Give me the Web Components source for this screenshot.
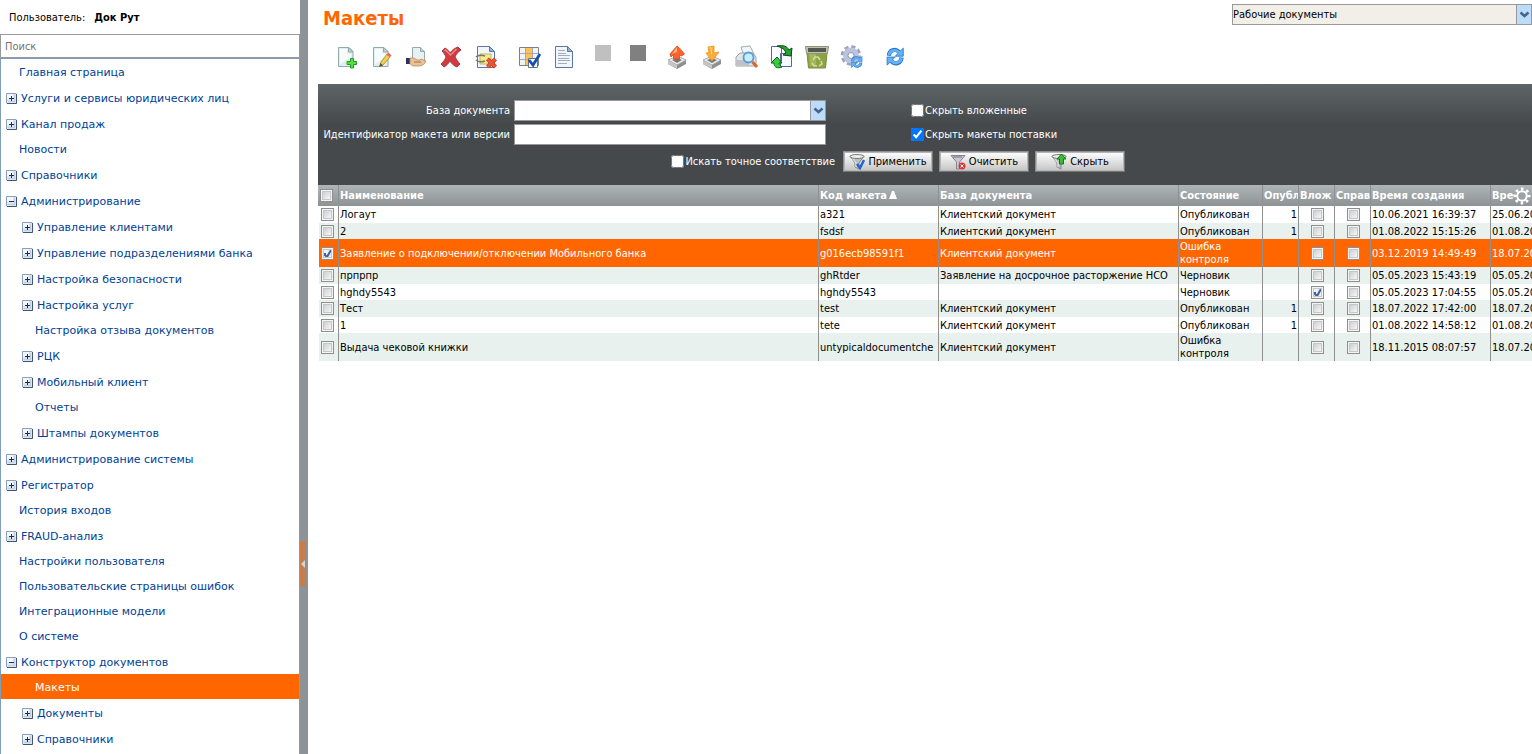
<!DOCTYPE html>
<html lang="ru">
<head>
<meta charset="utf-8">
<title>Макеты</title>
<style>
  html, body { margin: 0; }
  body {
    --ui: "DejaVu Sans Condensed", "Noto Sans", sans-serif;
    --wide: "DejaVu Sans", sans-serif;
    --accent: #ff6600;
    font: 11px/13px var(--ui);
    color: #000;
    background: #fff;
    overflow: hidden;
  }
</style>
</head>
<body>
<app-shell>
  <side-menu slot="side">
    <menu-item label="Главная страница"></menu-item>
    <menu-item label="Услуги и сервисы юридических лиц" branch></menu-item>
    <menu-item label="Канал продаж" branch></menu-item>
    <menu-item label="Новости"></menu-item>
    <menu-item label="Справочники" branch></menu-item>
    <menu-item label="Администрирование" branch open>
      <menu-item label="Управление клиентами" branch></menu-item>
      <menu-item label="Управление подразделениями банка" branch></menu-item>
      <menu-item label="Настройка безопасности" branch></menu-item>
      <menu-item label="Настройка услуг" branch></menu-item>
      <menu-item label="Настройка отзыва документов"></menu-item>
      <menu-item label="РЦК" branch></menu-item>
      <menu-item label="Мобильный клиент" branch></menu-item>
      <menu-item label="Отчеты"></menu-item>
      <menu-item label="Штампы документов" branch></menu-item>
    </menu-item>
    <menu-item label="Администрирование системы" branch></menu-item>
    <menu-item label="Регистратор" branch></menu-item>
    <menu-item label="История входов"></menu-item>
    <menu-item label="FRAUD-анализ" branch></menu-item>
    <menu-item label="Настройки пользователя"></menu-item>
    <menu-item label="Пользовательские страницы ошибок"></menu-item>
    <menu-item label="Интеграционные модели"></menu-item>
    <menu-item label="О системе"></menu-item>
    <menu-item label="Конструктор документов" branch open>
      <menu-item label="Макеты" current></menu-item>
      <menu-item label="Документы" branch></menu-item>
      <menu-item label="Справочники" branch></menu-item>
    </menu-item>
  </side-menu>
  <page-head>Макеты</page-head>
  <tool-bar></tool-bar>
  <filter-panel></filter-panel>
  <layout-table></layout-table>
</app-shell>

<script>
class Base extends HTMLElement {
  paint(html) {
    const t = document.createElement('template');
    t.innerHTML = '<style>:host,*{box-sizing:border-box}:host([hidden]){display:none}</style>' + html;
    this.attachShadow({ mode: 'open' }).append(t.content.cloneNode(true));
  }
}

customElements.define('app-shell', class extends Base {
  connectedCallback() {
    this.paint(`
    <style>
      :host { display: grid; grid-template-columns: 300px 8px minmax(0, 1fr); min-height: 100vh; }
      .bar { background: #8d9396; display: flex; align-items: flex-start; }
      .bar button { border: 0; padding: 0; width: 6px; height: 45px; margin-top: 541px; background: #c77c4b; display: grid; place-items: center; }
      main { padding-left: 10px; min-width: 0; }
    </style>
    <slot name="side"></slot>
    <div class="bar"><button aria-label="Свернуть меню"><svg width="4" height="8" viewBox="0 0 4 8"><path d="M4 0v8L0 4z" fill="#d4d4d4"/></svg></button></div>
    <main><slot></slot></main>`);
  }
});

customElements.define('side-menu', class extends Base {
  connectedCallback() {
    this.paint(`
    <style>
      :host { display: flex; flex-direction: column; }
      .user { height: 34px; padding: 0 9px; display: flex; align-items: center; gap: 9px; }
      input { display: block; width: 100%; height: 24px; border: 1px solid #999; padding: 0 4px; font: 11px/13px var(--ui); border-radius: 0; outline: 0; }
      input::placeholder { color: #757575; opacity: 1; }
      nav { flex: 1; border: 1px solid #7f9db9; border-width: 1px 1px 0; font-family: var(--wide); }
    </style>
    <div class="user"><span>Пользователь:</span><b>Док Рут</b></div>
    <input type="search" placeholder="Поиск" aria-label="Поиск">
    <nav><slot></slot></nav>`);
  }
});

customElements.define('menu-item', class extends Base {
  connectedCallback() {
    const branch = this.hasAttribute('branch'), open = this.hasAttribute('open');
    this.paint(`
    <style>
      :host { display: block; }
      ::slotted(menu-item) { --indent: 21px; }
      .row { display: flex; align-items: center; height: 25px; padding: 2px 0 0 calc(var(--indent, 5px) + 13px); }
      .row.branch { height: 26px; padding-left: var(--indent, 5px); gap: 4px; }
      .row.current { background: var(--accent); }
      a { color: #003f95; text-decoration: none; white-space: nowrap; }
      .current a { color: #fff; }
      button { border: 0; padding: 0; width: 11px; height: 11px; background: none; display: block; flex: none; }
      svg { display: block; }
    </style>
    <div class="row ${branch ? 'branch' : ''} ${this.hasAttribute('current') ? 'current' : ''}">
      ${branch ? `<button aria-label="${open ? 'Свернуть' : 'Развернуть'}"><svg width="11" height="11" viewBox="0 0 11 11"><path fill="#dbe4f1" d="M0 0h11v11H0z"/><path fill="#f3f7fc" d="M1 1h6v5H1z"/><path fill="#c3cede" d="M2 8h7v1H2zM8 2h1v7H8z"/><path fill="none" stroke="#8ba0bd" d="M.5 10V.5H10"/><path fill="none" stroke="#3e5574" d="M1 10.500h9.500V1"/><path stroke="#1c2f4c" d="M3 5.500h5${open ? '' : 'M5.500 3v5'}"/></svg></button>` : ''}
      <a href="#">${this.getAttribute('label')}</a>
    </div>
    <slot></slot>`);
  }
});

const CHEVRON = '<svg viewBox="0 0 14 19" width="14" height="19"><path fill="#bbdcfb" d="M0 0h14v19H0z"/><path d="M3.500 7.500 7.500 11 11.500 7.500" fill="none" stroke="#47638d" stroke-width="2.500"/></svg>';

/* Drop-down with a flat blue arrow box */
customElements.define('drop-down', class extends Base {
  connectedCallback() {
    this.paint(`
    <style>
      :host { display: block; }
      .box { display: grid; grid-template-columns: minmax(0, 1fr) 15px; height: 21px; border: 1px solid #999; background: var(--field, #fff); }
      select { grid-area: 1 / 1 / 2 / 3; appearance: none; border: 0; border-radius: 0; padding: 0 16px 0 0; margin: 0; background: none; color: #000; font: 11px/13px var(--ui); outline: 0; }
      .arrow { grid-area: 1 / 2; border-left: 1px solid #999; pointer-events: none; }
      svg { display: block; }
    </style>
    <div class="box"><select aria-label="${this.getAttribute('label')}"><option>${this.getAttribute('value') || ''}</option></select><span class="arrow">${CHEVRON}</span></div>`);
  }
});

customElements.define('page-head', class extends Base {
  connectedCallback() {
    this.paint(`
    <style>
      :host { display: flex; justify-content: space-between; align-items: flex-start; height: 36px; padding: 4px 0 0 5px; }
      h1 { margin: 0; font: bold 20px/28px var(--ui); color: var(--accent); }
      drop-down { width: 300px; --field: #f2efe8; }
    </style>
    <h1><slot></slot></h1>
    <drop-down label="Набор документов" value="Рабочие документы"></drop-down>`);
  }
});

const page = '<path d="M4.500 2.500h10.500l4 4v15h-14.500z" fill="#e3eeee" stroke="#93a9ac"/><path d="M14.500 2.500 19 7h-4.500z" fill="#c2d2d4" stroke="#93a9ac"/><path d="M6 4h7v5h4v3L6 19z" fill="#f6fbfb"/>';
const bluePage = '<path d="M3.500 1.500h12l5 5v16h-17z" fill="#f1f6fd" stroke="#5b77a6"/><path d="M15.500 1.500v5h5z" fill="#8fb0dd" stroke="#5b77a6"/>';
const tray = '<path d="M3 15 12 11l9 4v4l-9 5-9-5z" fill="#8e8e8e"/><path d="m3 15 9-4 9 4-9 5z" fill="#ececec" stroke="#a2a2a2" stroke-width=".8"/><path d="m3 15 9 5v3.500l-9-4.500z" fill="#c6c6c6"/><path d="m7 15 5-2 5 2-5 3z" fill="#777"/>';
/* Two arrows that chase each other round a circle */
const half = '<path d="M4.500 11.500C5 5 12 2.500 16.500 7" fill="none" stroke="#2777cc" stroke-width="5"/><path d="M21.500 2.500v9.500H12z" fill="#62b4f6" stroke="#2777cc"/><path d="M4.700 10.500C5.500 5.500 12 3 17 8" fill="none" stroke="#62b4f6" stroke-width="3.200"/>';
const sync = half + '<g transform="rotate(180 12 12.500)">' + half + '</g>';
const ICONS = {
  add: page + '<path d="M16.500 13.500h3v3h3v3h-3v3.500h-3v-3.500h-3.500v-3h3.500z" fill="#5fdc3d" stroke="#16a028"/>',
  edit: page + '<path d="m11 21 1-4L18 9l3 3-7 8z" fill="#f5cf45" stroke="#a8823a" stroke-width=".8"/><path d="m17.500 9.500 2-2 3 3-2 2z" fill="#e66764"/><path d="m10 22 1.500-4 2.500 2.500z" fill="#554"/>',
  give: '<path d="M8.500 2.500h8l4 4v10h-12z" fill="#e6f2f2" stroke="#93a9ac"/><path d="M16.500 2.500v4h4" fill="#c2d2d4" stroke="#93a9ac"/><path d="M2 13h4v6H2z" fill="#27335e"/><path d="M6 13h4l3 2h3l1-1 5 2c-1 3-4 5-7 5H9l-3-2z" fill="#eac199" stroke="#b98a5b" stroke-width=".8"/><path d="M10 17h7" stroke="#a5713d"/>',
  del: '<path d="m3 6 3-3c2 1 4 3 5 5 2-3 5-5 8-6l3 3c-3 2-5 4-6 7 2 3 3 5 5 7l-3 3c-3-1-5-3-7-6-2 3-4 5-6 6l-3-3c2-2 4-4 5-7-1-2-2-4-4-6z" fill="#d33a3f" stroke="#9b4045"/><path d="m5.500 6 1-1 5 5 6-6" stroke="#ee898b" stroke-width="1.500" fill="none"/>',
  stamp: bluePage + '<path d="M6 9h11v10H6z" fill="#f6ec8c" stroke="#bdb662"/><path d="M2 12c3-3 6-2 9-1M2 15c3 3 6 2 9 1" fill="none" stroke="#77786a" stroke-width="1.500"/><path d="m13.500 14 8 8m0-8-8 8" stroke="#b03a1e" stroke-width="4"/><path d="m13.500 14 8 8m0-8-8 8" stroke="#f05432" stroke-width="2.800"/>',
  grid: '<path d="M2.500 2.500h19v18h-19z" fill="#f1f2f6" stroke="#777f90"/><path d="M9 3h6v17H9z" fill="#ffc24d"/><path d="M2.500 8.500h19m-19 6h19M8.500 3v17m7-17v17" stroke="#a5a8b4"/><path d="M11.500 13.500h9v9h-9z" fill="#fff" stroke="#667085"/><path d="m12 15 4 5 7-11" fill="none" stroke="#164fb3" stroke-width="2.800"/>',
  text: bluePage + '<path d="M6 5.500h7M6 8.500h8M6 10.500h12M6 13.500h11M6 15.500h12M6 18.500h9" stroke="#a0acbd"/>',
  light: '<path fill="#c0c0c0" d="M4 0h16v16H4z"/>',
  dark: '<path fill="#808080" d="M4 0h16v16H4z"/>',
  up: tray + '<path d="M12 1c3 2 5 5 7.500 8l-3 2-2-1v4h-6v-4.500L6 12l-1-3z" fill="#fa642a" stroke="#d9481a" stroke-width=".8"/><path d="m12 2-5 7 5-2z" fill="#ffb184"/>',
  down: tray + '<path d="M8 2l6-1v7l5-1-7 9-6-8 3-.500z" fill="#ffae35" stroke="#ed921d" stroke-width=".8"/><path d="M9.500 3h2v6" stroke="#ffda8e" fill="none"/>',
  preview: '<path d="m6 2 9-1 4 8-10 2z" fill="#eff6fc" stroke="#a6acb2"/><path d="M1 12l4-4h13l3 4v9H1z" fill="#e2e4e7" stroke="#a0a4a8"/><path d="M1 15h13v6H1z" fill="#bfc3c7"/><circle cx="13.500" cy="12.500" r="5" fill="#c7edff" stroke="#5a9bd2" stroke-width="1.800"/><path d="m17.500 17 4.500 5" stroke="#e5622a" stroke-width="3"/>',
  swap: '<path d="M1.500 1.500h10v15h-10zM10.500 8.500h11v13h-11z" fill="#f8fbff" stroke="#5268a0"/><path d="M7 1c6-1 10 0 12 4l3-2-1 8-8-1 3-2c-1-3-3-5-9-7z" fill="#20a72e" stroke="#09420e"/><path d="m1 18 6-6 5 6H9c0 2 1 3 3 4-5 2-8 0-8-4z" fill="#35cf3e" stroke="#086414"/>',
  bin: '<path d="M2 8h20l-1.500 15h-17z" fill="#8da343" stroke="#7c8d3e"/><path d="M4 9h7v12H5z" fill="#a3b75a"/><path d="M.500 1.500h23l-1 7h-21z" fill="#bfc3a7" stroke="#8f937c"/><path d="M3 3h18v4H3z" fill="#55584f"/><path d="m8 15 2-3h3l2 3m1 1 1 3-3 2m-2 0H9l-2-3" fill="none" stroke="#cfdd98" stroke-width="1.600"/>',
  gear: '<circle cx="11" cy="10.500" r="8.500" fill="none" stroke="#9aa1c4" stroke-width="3.500" stroke-dasharray="4 2.675"/><circle cx="11" cy="10.500" r="5.500" fill="none" stroke="#bcc3dd" stroke-width="5"/><circle cx="11" cy="10.500" r="3" fill="#fff" stroke="#8b92b7"/><g transform="translate(10 10) scale(.56)">' + sync + '</g>',
  refresh: '<g transform="translate(2 1) scale(.85)">' + sync + '</g>'
};

customElements.define('tool-bar', class extends Base {
  connectedCallback() {
    const groups = [
      [['add', 'Создать'], ['edit', 'Изменить'], ['give', 'Передать'], ['del', 'Удалить'], ['stamp', 'Снять отметку']],
      [['grid', 'Выбрать'], ['text', 'Просмотр']],
      [['light', 'Светлый'], ['dark', 'Темный']],
      [['up', 'Выгрузить'], ['down', 'Загрузить'], ['preview', 'Печать'], ['swap', 'Обмен'], ['bin', 'Корзина'], ['gear', 'Пересчитать']],
      [['refresh', 'Обновить']]
    ];
    this.paint(`
    <style>
      :host { display: flex; gap: 15px; padding: 9px 0 0 16px; height: 48px; }
      .group { display: flex; gap: 11px; }
      .group:nth-of-type(2), .group:last-of-type { margin-left: 4px; }
      button { border: 0; padding: 0; width: 24px; height: 24px; background: none; }
      svg { display: block; }
    </style>
    ${groups.map(g => `<div class="group">${g.map(([k, n]) => `<button title="${n}" aria-label="${n}"><svg width="24" height="24" viewBox="0 0 24 24">${ICONS[k]}</svg></button>`).join('')}</div>`).join('')}`);
  }
});

const funnel = '<path d="m1 2 14 0-5 7v6l-4-2V9z" fill="#bcc0c3" stroke="#85898d"/><path d="m3 4 4 5v4" fill="none" stroke="#eee"/><ellipse cx="8" cy="2.500" rx="7" ry="2" fill="#eee" stroke="#777"/>';
const flatFunnel = '<path d="M1 1.500h14L9.500 8v7h-3V8z" fill="#c9c7d2" stroke="#858391"/><path d="M3 3h9" stroke="#77717f"/>';
customElements.define('filter-panel', class extends Base {
  connectedCallback() {
    this.paint(`
    <style>
      :host { display: block; padding: 16px 0 13px; color: #fff; background: linear-gradient(#5e6467, #45494c 40px); }
      .fields { display: grid; grid-template-columns: 192px 312px auto; column-gap: 4px; row-gap: 3px; justify-content: start; align-items: center; }
      .name { text-align: right; white-space: nowrap; }
      .fields input[type=text] { width: 100%; height: 21px; border: 1px solid #999; border-radius: 0; padding: 0 2px; font: 11px/13px var(--ui); }
      .check { display: flex; align-items: center; gap: 1px; white-space: nowrap; }
      .fields .check { padding-left: 81px; height: 21px; }
      .check input { margin: 0; width: 13px; height: 13px; }
      .actions { display: flex; justify-content: flex-end; gap: 6px; max-width: 807px; margin-top: 6px; }
      .actions .check { margin-right: 2px; }
      button { width: 90px; height: 21px; padding: 0; display: flex; align-items: center; justify-content: center; gap: 3px; border: 1px solid; border-color: #8f8f8f #777 #777 #8f8f8f; box-shadow: inset 0 0 0 1px #b5b5b5; background: linear-gradient(#fff, #c4c4c4); font: 11px/13px var(--ui); color: #000; }
      svg { display: block; }
    </style>
    <div class="fields">
      <span class="name">База документа</span>
      <drop-down label="База документа"></drop-down>
      <label class="check"><input type="checkbox">Скрыть вложенные</label>
      <label class="name" for="ident">Идентификатор макета или версии</label>
      <input type="text" id="ident">
      <label class="check"><input type="checkbox" checked>Скрыть макеты поставки</label>
    </div>
    <div class="actions">
      <label class="check"><input type="checkbox">Искать точное соответствие</label>
      <button><svg width="16" height="16" viewBox="0 0 16 16">${funnel}<path d="m8 10 3 4 4-8" fill="none" stroke="#2466c4" stroke-width="2.500"/></svg>Применить</button>
      <button><svg width="16" height="16" viewBox="0 0 16 16">${flatFunnel}<circle cx="12" cy="12" r="3.500" fill="#d8353b"/><path d="m10.500 10.500 3 3m0-3-3 3" stroke="#fff"/></svg>Очистить</button>
      <button><svg width="16" height="16" viewBox="0 0 16 16">${funnel}<path d="m10.500 0 4.500 5h-2.500v5h-4V5H6z" fill="#39bd35" stroke="#137719"/></svg>Скрыть</button>
    </div>`);
  }
});

customElements.define('layout-table', class extends Base {
  connectedCallback() {
    const K = 'Клиентский документ', P = 'Опубликован', E = 'Ошибка контроля', D = 'Черновик';
    /* name, code, base, state, published, nested, created, changed, row class */
    const rows = [
      ['Логаут', 'a321', K, P, '1', 0, '10.06.2021 16:39:37', '25.06.2021', 'high'],
      ['2', 'fsdsf', K, P, '1', 0, '01.08.2022 15:15:26', '01.08.2022', ''],
      ['Заявление о подключении/отключении Мобильного банка', 'g016ecb98591f1', K, E, '', 0, '03.12.2019 14:49:49', '18.07.2022', 'tall sel'],
      ['прпрпр', 'ghRtder', 'Заявление на досрочное расторжение НСО', D, '', 0, '05.05.2023 15:43:19', '05.05.2023', 'high'],
      ['hghdy5543', 'hghdy5543', '', D, '', 1, '05.05.2023 17:04:55', '05.05.2023', ''],
      ['Тест', 'test', K, P, '1', 0, '18.07.2022 17:42:00', '18.07.2022', 'high'],
      ['1', 'tete', K, P, '1', 0, '01.08.2022 14:58:12', '01.08.2022', ''],
      ['Выдача чековой книжки', 'untypicaldocumentche', K, E, '', 0, '18.11.2015 08:07:57', '18.07.2022', 'tall']
    ];
    const box = (on, n) => `<input type="checkbox" aria-label="${n}" ${on ? 'checked' : ''}>`;
    const heads = ['Наименование', 'Код макета<svg class="sort" width="8" height="8" viewBox="0 0 8 8"><path d="M3 0h2l3 8H0z" fill="#fff"/></svg>', 'База документа', 'Состояние', 'Опубл', 'Влож', 'Справ', 'Время создания', 'Вре'];
    this.paint(`
    <style>
      :host { display: block; position: relative; overflow: hidden; }
      table { width: 1293px; table-layout: fixed; border-collapse: separate; border-spacing: 0; }
      th, td { padding: 0 0 0 1px; border-right: 1px solid #909090; overflow: hidden; white-space: nowrap; text-align: left; vertical-align: middle; line-height: 13px; }
      th { height: 21px; color: #fff; background: linear-gradient(#afb4b6, #8d9295); }
      td { height: 16px; }
      .high td { height: 17px; }
      .tall td { height: 28px; }
      tbody tr:nth-child(even) { background: #e8f1ee; }
      tbody .sel { background: var(--accent); color: #fff; }
      td.state { white-space: normal; }
      td.num { text-align: right; padding-right: 1px; }
      td.box { text-align: center; padding: 0 0 0 1px; }
      th:first-child, td.pick { padding: 0 0 0 2px; }
      td.pick { border-left: 1px solid #fff; }
      .sort { margin-left: 2px; }
      input { appearance: none; display: block; margin: 0 auto; width: 13px; height: 13px; border: 1px solid #8e8f8f; background: linear-gradient(135deg, #cbcfd5, #f6f6f6) 2px 2px / 7px 7px no-repeat, #f4f4f4; box-shadow: inset 0 0 0 1px #f4f4f4, inset 0 0 0 2px #c4c8ce; }
      .pick input, th input { margin: 0; }
      input:checked { background: #eef0f4 url('data:image/svg+xml,<svg xmlns="http://www.w3.org/2000/svg" viewBox="0 0 11 11"><path d="M3 5v2l2 2 4-7" fill="none" stroke="%23405fa0" stroke-width="2"/></svg>'); }
      .setup { position: absolute; top: 2px; right: 1px; border: 0; padding: 0; width: 18px; height: 18px; background: none; }
      .setup svg { display: block; }
    </style>
    <table>
      <colgroup><col style="width:21px"><col style="width:480px"><col style="width:120px"><col style="width:240px"><col style="width:84px"><col style="width:36px"><col style="width:36px"><col style="width:36px"><col style="width:120px"><col style="width:120px"></colgroup>
      <thead><tr><th>${box(0, 'Выбрать все')}</th>${heads.map(h => `<th>${h}</th>`).join('')}</tr></thead>
      <tbody>${rows.map(r => `<tr class="${r[8]}"><td class="pick">${box(r[8].includes('sel'), 'Выбрать')}</td><td>${r[0]}</td><td>${r[1]}</td><td>${r[2]}</td><td class="state">${r[3]}</td><td class="num">${r[4]}</td><td class="box">${box(r[5], 'Вложенный')}</td><td class="box">${box(0, 'Справочник')}</td><td>${r[6]}</td><td>${r[7]}</td></tr>`).join('')}</tbody>
    </table>
    <button class="setup" aria-label="Настройка столбцов"><svg width="18" height="18" viewBox="0 0 18 18"><circle cx="9" cy="9" r="7" fill="none" stroke="#fff" stroke-width="3" stroke-dasharray="2.500 2.998" stroke-dashoffset="1.250"/><circle cx="9" cy="9" r="4.800" fill="#9da2a5" stroke="#fff" stroke-width="2"/></svg></button>`);
  }
});
</script>
</body>
</html>
